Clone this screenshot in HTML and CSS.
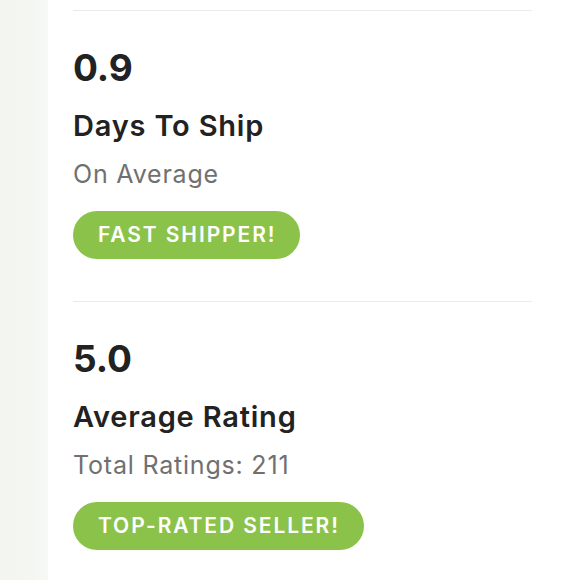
FILE: index.html
```html
<!DOCTYPE html>
<html>
<head>
<meta charset="utf-8">
<link rel="stylesheet" href="styles.css">
</head>
<body>
<div class="page">
  <div class="rail"></div>
  <div class="panel">
    <section class="stat">
      <div class="stat-value">0.9</div>
      <div class="stat-title">Days To Ship</div>
      <div class="stat-sub">On Average</div>
      <span class="badge">FAST SHIPPER!</span>
    </section>
    <section class="stat">
      <div class="stat-value">5.0</div>
      <div class="stat-title">Average Rating</div>
      <div class="stat-sub">Total Ratings: 211</div>
      <span class="badge">TOP-RATED SELLER!</span>
    </section>
  </div>
</div>
</body>
</html>
```
FILE: styles.css
```css
html, body {
  margin: 0;
  padding: 0;
  background: #ffffff;
}
body {
  font-family: Inter, "Noto Sans", sans-serif;
  color: #222222;
  width: 580px;
  height: 580px;
  overflow: hidden;
}
.page {
  display: flex;
  height: 580px;
}
.rail {
  width: 48px;
  flex: none;
  background: linear-gradient(to right, #f2f5f0 0%, #f4f6f2 70%, #f8f9f6 100%);
}
.panel {
  padding: 10px 0 0 25px;
  width: 459px;
}
.stat {
  border-top: 1px solid #ebebeb;
  padding: 35px 0 42px;
  display: flex;
  flex-direction: column;
  align-items: flex-start;
}
.stat-value {
  font-size: 37px;
  line-height: 44px;
  font-weight: 700;
  color: #222222;
}
.stat-title {
  margin-top: 18px;
  font-size: 29px;
  line-height: 36px;
  font-weight: 600;
  letter-spacing: 0.8px;
  color: #222222;
}
.stat-sub {
  margin-top: 15px;
  font-size: 25px;
  line-height: 30px;
  letter-spacing: 0.8px;
  color: #707070;
}
.badge {
  margin-top: 22px;
  height: 48px;
  line-height: 48px;
  padding: 0 24px 0 25px;
  border-radius: 24px;
  background: #8bc34a;
  color: #ffffff;
  font-size: 21px;
  font-weight: 600;
  letter-spacing: 1.9px;
}
```
